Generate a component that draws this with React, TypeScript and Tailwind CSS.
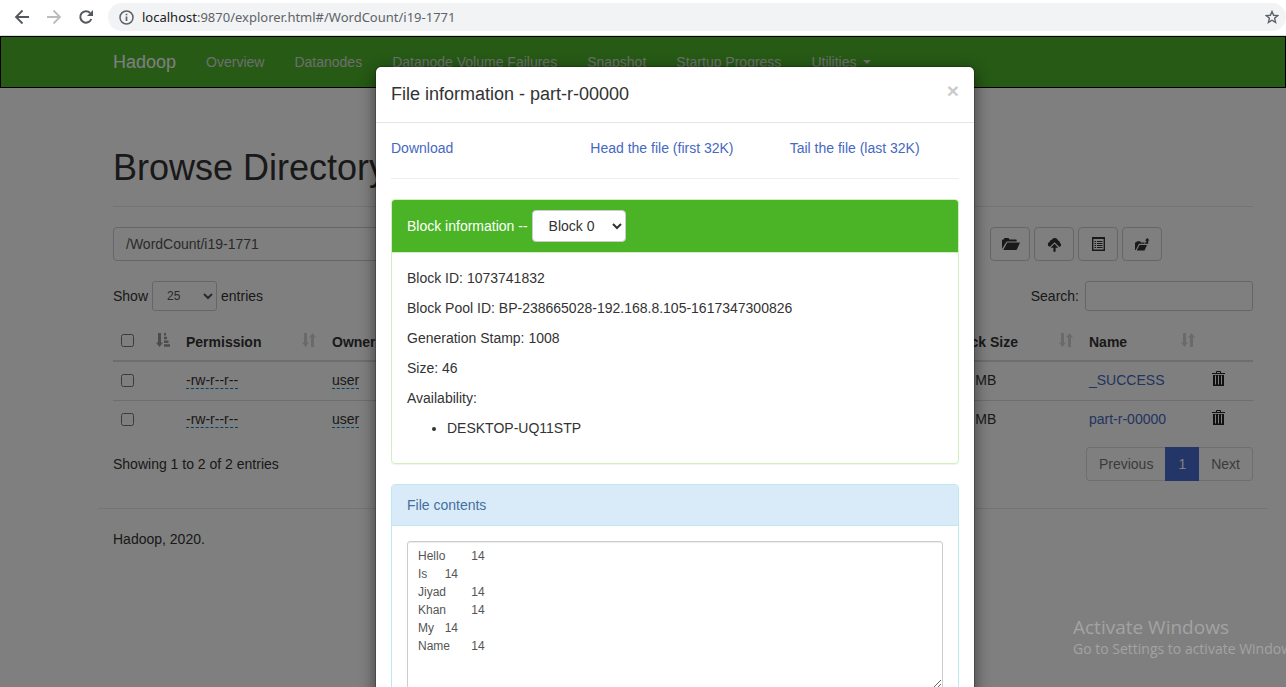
import type { ReactNode } from "react";

const navItems = ["Overview", "Datanodes", "Datanode Volume Failures", "Snapshot", "Startup Progress"];

const rows = [
  { permission: "-rw-r--r--", owner: "user", group: "supergroup", size: "0 B", modified: "Apr 02 12:41", name: "_SUCCESS" },
  { permission: "-rw-r--r--", owner: "user", group: "supergroup", size: "46 B", modified: "Apr 02 12:41", name: "part-r-00000" },
];

const fileText = "Hello\t14\nIs\t14\nJiyad\t14\nKhan\t14\nMy\t14\nName\t14\n";

function SortIcon() {
  return (
    <svg width="14" height="14" viewBox="0 0 14 14" fill="currentColor" className="mt-px shrink-0 opacity-20" aria-hidden="true">
      <path d="M2 0h3v9.5h2L3.5 14 0 9.5h2zM9 14V4.500H7L10.500 0 14 4.500h-2V14z" />
    </svg>
  );
}

function SortAscIcon() {
  return (
    <svg width="14" height="14" viewBox="0 0 14 14" fill="currentColor" className="mt-px shrink-0 opacity-50" aria-hidden="true">
      <path d="M2 0h3v9.500h2L3.500 14 0 9.500h2zM8 0h2v2.500H8zM8 3.700h3v2.500H8zM8 7.400h4.500v2.500H8zM8 11.200h6v2.500H8z" />
    </svg>
  );
}

function TrashIcon() {
  return (
    <svg width="13" height="15" viewBox="0 0 13 15" aria-hidden="true">
      <path d="M4.500 2V.500h4V2" fill="none" stroke="#222" strokeWidth="1" />
      <path d="M0 2h13v1H0z" fill="#222" />
      <path d="M1 4h11v11H1z" fill="#222" />
      <path d="M3.500 4.500v9M6.500 4.500v9M9.500 4.500v9" stroke="#fff" strokeWidth="1" />
    </svg>
  );
}

function ToolButton({ label, children }: { label: string; children: ReactNode }) {
  return (
    <button type="button" aria-label={label} className="flex h-[34px] w-10 items-center justify-center rounded border border-[#ccc] bg-white text-[#333]">
      {children}
    </button>
  );
}

function Th({ children }: { children: ReactNode }) {
  return (
    <th className="px-2 pt-1 pb-2 text-left font-bold">
      <span className="flex h-5 items-start justify-between whitespace-nowrap">
        {children}
        <SortIcon />
      </span>
    </th>
  );
}

function BrowserBar() {
  return (
    <div className="flex h-9 shrink-0 items-center border-b border-[#dadce0] bg-white pb-px pl-3">
      <button type="button" aria-label="Back" className="mr-3 flex size-5 items-center justify-center">
        <svg width="16" height="16" viewBox="0 0 16 16" fill="none" stroke="#54585d" strokeWidth="1.800"><path d="M15 8H2M8.500 1.500 2 8l6.500 6.500" /></svg>
      </button>
      <button type="button" aria-label="Forward" className="mr-3 flex size-5 items-center justify-center">
        <svg width="16" height="16" viewBox="0 0 16 16" fill="none" stroke="#babcbe" strokeWidth="1.800"><path d="M1 8h13M7.500 1.500 14 8l-6.500 6.500" /></svg>
      </button>
      <button type="button" aria-label="Reload" className="mr-3 flex size-5 items-center justify-center">
        <svg width="16" height="16" viewBox="0 0 16 16"><path d="M13.300 10a5.700 5.700 0 1 1-1.200-6" fill="none" stroke="#54585d" strokeWidth="2" /><path d="M15 1v6H9z" fill="#54585d" /></svg>
      </button>
      <div className="flex h-7 min-w-0 flex-1 items-center rounded-full bg-[#f1f3f4] px-[11px] pr-[7px]">
        <svg width="15" height="15" viewBox="0 0 15 15" fill="none" stroke="#5f6368" strokeWidth="1.500"><circle cx="7.500" cy="7.500" r="6.500" /><path d="M7.500 6.500V11M7.500 3.700v1.600" strokeWidth="1.700" /></svg>
        <div className="min-w-0 flex-1 truncate pl-2 font-['Noto_Sans',sans-serif] text-[13px] leading-5 text-[#5f6368]">
          <span className="text-[#202124]">localhost</span>:9870/explorer.html#/WordCount/i19-1771
        </div>
        <button type="button" aria-label="Bookmark this page" className="flex size-3.5 items-center justify-center">
          <svg width="14" height="14" viewBox="0 0 14 14" fill="none" stroke="#5f6368" strokeWidth="1.400"><path d="m7 1.500 1.600 3.800 4.200.300-3.200 2.700 1 4.100L7 10.200 3.400 12.400l1-4.100L1.200 5.600l4.200-.300z" /></svg>
        </button>
      </div>
    </div>
  );
}

function Page() {
  return (
    <div className="h-full bg-white">
      <nav className="border border-black bg-[#4cb52a] pl-20">
        <div className="mx-auto flex max-w-[1170px] items-center whitespace-nowrap">
          <a href="#home" className="px-[15px] py-[15px] text-[18px] leading-5 text-white">Hadoop</a>
          {navItems.map((item) => (
            <a key={item} href="#nav" className="px-[15px] py-[15px] text-[#ddd]">{item}</a>
          ))}
          <a href="#utilities" className="flex items-center gap-1.5 px-[15px] py-[15px] text-[#ddd]">
            Utilities
            <svg width="8" height="4" viewBox="0 0 8 4" fill="currentColor" aria-hidden="true"><path d="M0 0h8L4 4z" /></svg>
          </a>
        </div>
      </nav>

      <div className="pt-[60px] pl-20">
        <div className="mx-auto max-w-[1170px]">
          <main className="px-[15px]">
            <h1 className="mb-5 border-b border-[#e8e8e8] pb-[18px] text-[36px] leading-10 font-normal">Browse Directory</h1>

            <div className="flex">
              <div className="mr-[30px] flex-1">
                <input aria-label="Directory" defaultValue="/WordCount/i19-1771" className="h-[34px] w-full rounded border border-[#ccc] bg-white px-3 text-[#555]" />
              </div>
              <div className="flex w-[263px] gap-1">
                <ToolButton label="Create directory">
                  <svg width="20" height="14" viewBox="0 0 20 14" fill="currentColor"><path d="M2 12V3.500q0-1 1-1h.500L4.500 1h4l1 1.500H16q.700 0 .700 1v1H7.500q-1 0-1.500 1z" /><path d="M7.300 5.500H20L17 12.300q-.300.700-1 .700H3.300z" /></svg>
                </ToolButton>
                <ToolButton label="Upload files">
                  <svg width="15" height="15" viewBox="0 0 15 15" fill="currentColor"><path d="M3 9.800A2.400 2.400 0 0 1 .800 7.300 2.400 2.400 0 0 1 2.600 5.100 2 2 0 0 1 4.600 3a3.500 3.500 0 0 1 6.500.600A2.700 2.700 0 0 1 13 6a2.100 2.100 0 0 1-.500 3.900L7.500 5.200z" /><path d="M7.500 6.800 11.300 10.800H8.600v4H6.400v-4H3.700z" /></svg>
                </ToolButton>
                <ToolButton label="Cut">
                  <svg width="13" height="14" viewBox="0 0 13 14"><path d="M.700.700h11.600v12.600H.700z" fill="none" stroke="currentColor" strokeWidth="1.400" /><path d="M0 0h13v2H0z" fill="currentColor" /><path d="M2.500 4.500H4M2.500 6.500H4M2.500 8.500H4M2.500 10.500H4M5 4.500h5.500M5 6.500h5.500M5 8.500h5.500M5 10.500h5.500" stroke="currentColor" strokeWidth="1" /></svg>
                </ToolButton>
                <ToolButton label="Parent directory">
                  <svg width="15" height="13" viewBox="0 0 15 13" fill="currentColor"><path d="M0 12V4.500h1L2 3.300h3L6 4.500h3v1.300H4L.700 12z" /><path d="M4.500 7H12l-2.500 5.500H1.700z" /><path d="M9.500 4.500h1.800V2.500H10L12.200 0l2.300 2.500h-1.300v3.300H9.500z" /></svg>
                </ToolButton>
              </div>
            </div>

            <div className="mt-5 flex items-center justify-between">
              <label className="flex items-center gap-1">
                Show
                <select defaultValue="25" className="h-[30px] w-[65px] rounded-[3px] border border-[#ccc] bg-white px-2.5 text-[12px] text-[#555]">
                  <option>25</option>
                  <option>50</option>
                </select>
                entries
              </label>
              <label className="flex items-center gap-1.5">
                Search:
                <input type="search" className="h-[30px] w-42 rounded-[3px] border border-[#ccc] bg-white px-2.5 text-[12px]" />
              </label>
            </div>

            <table className="mt-[17px] w-full table-fixed border-collapse">
              <colgroup>
                <col className="w-[65px]" />
                <col className="w-[146px]" />
                <col className="w-[106px]" />
                <col className="w-[110px]" />
                <col className="w-20" />
                <col />
                <col className="w-[120px]" />
                <col className="w-[141px]" />
                <col className="w-[122px]" />
                <col className="w-[50px]" />
              </colgroup>
              <thead>
                <tr className="border-b-2 border-[#ddd]">
                  <th className="px-2 pt-1 pb-2">
                    <span className="flex h-5 items-start justify-between">
                      <input type="checkbox" aria-label="Select all" className="mt-0.5 size-[13px]" />
                      <SortAscIcon />
                    </span>
                  </th>
                  <Th>Permission</Th>
                  <Th>Owner</Th>
                  <Th>Group</Th>
                  <Th>Size</Th>
                  <Th>Last Modified</Th>
                  <Th>Replication</Th>
                  <Th>Block Size</Th>
                  <Th>Name</Th>
                  <th aria-label="Actions" />
                </tr>
              </thead>
              <tbody>
                {rows.map((row, index) => (
                  <tr key={row.name} className={index > 0 ? "h-[39px] border-t border-[#ddd]" : "h-[39px]"}>
                    <td className="px-2"><input type="checkbox" aria-label={row.name} className="block size-[13px]" /></td>
                    <td className="px-2 pb-0.5"><span className="border-b border-dashed border-[#0088cc]">{row.permission}</span></td>
                    <td className="px-2 pb-0.5"><span className="border-b border-dashed border-[#0088cc]">{row.owner}</span></td>
                    <td className="px-2 pb-0.5">{row.group}</td>
                    <td className="px-2 pb-0.5">{row.size}</td>
                    <td className="px-2 pb-0.5">{row.modified}</td>
                    <td className="px-2 pb-0.5">1</td>
                    <td className="px-2 pb-0.5">128 MB</td>
                    <td className="px-2 pb-0.5"><a href="#file" className="text-[#4668bf]">{row.name}</a></td>
                    <td className="px-2 pb-1"><button type="button" aria-label={"Delete " + row.name} className="ml-px block"><TrashIcon /></button></td>
                  </tr>
                ))}
              </tbody>
            </table>

            <div className="mt-2 flex items-center justify-between">
              <p>Showing 1 to 2 of 2 entries</p>
              <div className="flex h-[34px] text-[#777]">
                <button type="button" className="rounded-l border border-r-0 border-[#ddd] px-3">Previous</button>
                <button type="button" className="bg-[#486ad0] px-[13px] text-white">1</button>
                <button type="button" className="rounded-r border border-l-0 border-[#ddd] px-3">Next</button>
              </div>
            </div>
          </main>
          <footer className="mt-[27px] border-t border-[#e8e8e8] px-[15px] pt-5">
            <p>Hadoop, 2020.</p>
          </footer>
        </div>
      </div>
    </div>
  );
}

function FileDialog() {
  return (
    <div role="dialog" aria-labelledby="dialog-title" className="mx-auto mt-[30px] max-w-[600px] rounded-md border border-black/20 bg-white bg-clip-padding shadow-[0_5px_15px_rgba(0,0,0,0.5)]">
      <div className="flex items-start justify-between border-b border-[#e5e5e5] px-[15px] pt-3.5 pb-[15px]">
        <h4 id="dialog-title" className="text-[18px] leading-[26px]">File information - part-r-00000</h4>
        <button type="button" aria-label="Close" className="text-[21px] leading-5 font-bold text-black opacity-20">×</button>
      </div>
      <div className="p-[15px]">
        <div className="mb-5 grid grid-cols-3 gap-[30px] border-b border-[#eee] pb-5 whitespace-nowrap text-[#4668bf]">
          <a href="#download">Download</a>
          <a href="#head">Head the file (first 32K)</a>
          <a href="#tail">Tail the file (last 32K)</a>
        </div>

        <section className="mb-5 rounded border border-[#d0f0c0] shadow-[0_1px_1px_rgba(0,0,0,0.05)]">
          <div className="flex items-center gap-1 rounded-t-[3px] border-b border-[#d0f0c0] bg-[#4ab426] px-[15px] py-2.5 text-white">
            <label htmlFor="block">Block information --</label>
            <select id="block" className="h-8 w-[94px] rounded border border-[#ccc] bg-white px-3 text-[14px] text-[#333]">
              <option>Block 0</option>
            </select>
          </div>
          <div className="flex flex-col gap-2.5 px-[15px] pt-[15px] pb-[25px]">
            <p>Block ID: 1073741832</p>
            <p>Block Pool ID: BP-238665028-192.168.8.105-1617347300826</p>
            <p>Generation Stamp: 1008</p>
            <p>Size: 46</p>
            <p>Availability:</p>
            <ul className="list-disc pl-10">
              <li>DESKTOP-UQ11STP</li>
            </ul>
          </div>
        </section>

        <section className="rounded border border-[#bce8f1] shadow-[0_1px_1px_rgba(0,0,0,0.05)]">
          <label htmlFor="contents" className="block rounded-t-[3px] border-b border-[#bce8f1] bg-[#d9ebf9] px-[15px] py-2.5 text-[#44709d]">File contents</label>
          <div className="p-[15px]">
            <textarea
              id="contents"
              defaultValue={fileText}
              className="block h-[148px] w-full rounded-[3px] border border-[#ccc] bg-white px-2.5 py-[5px] text-[12px] leading-[18px] text-[#555] shadow-[inset_0_1px_1px_rgba(0,0,0,0.075)] [tab-size:8]"
            />
          </div>
        </section>
      </div>
    </div>
  );
}

export default function App() {
  return (
    <div className="flex h-screen flex-col overflow-hidden font-['Liberation_Sans',Arial,sans-serif] text-[14px] leading-5 text-[#333]">
      <BrowserBar />
      <div className="relative min-h-0 flex-1 overflow-hidden">
        <Page />
        <div className="absolute inset-0 overflow-y-auto bg-black/50 pb-8 pl-16 [scrollbar-width:none]">
          <FileDialog />
        </div>
        <div className="pointer-events-none absolute right-0 bottom-7 w-[213px] overflow-hidden font-['Open_Sans',sans-serif] whitespace-nowrap text-[#a3a3a3]">
          <p className="text-[19px] leading-6">Activate Windows</p>
          <p className="text-[14px] leading-5">Go to Settings to activate Windows.</p>
        </div>
      </div>
    </div>
  );
}
